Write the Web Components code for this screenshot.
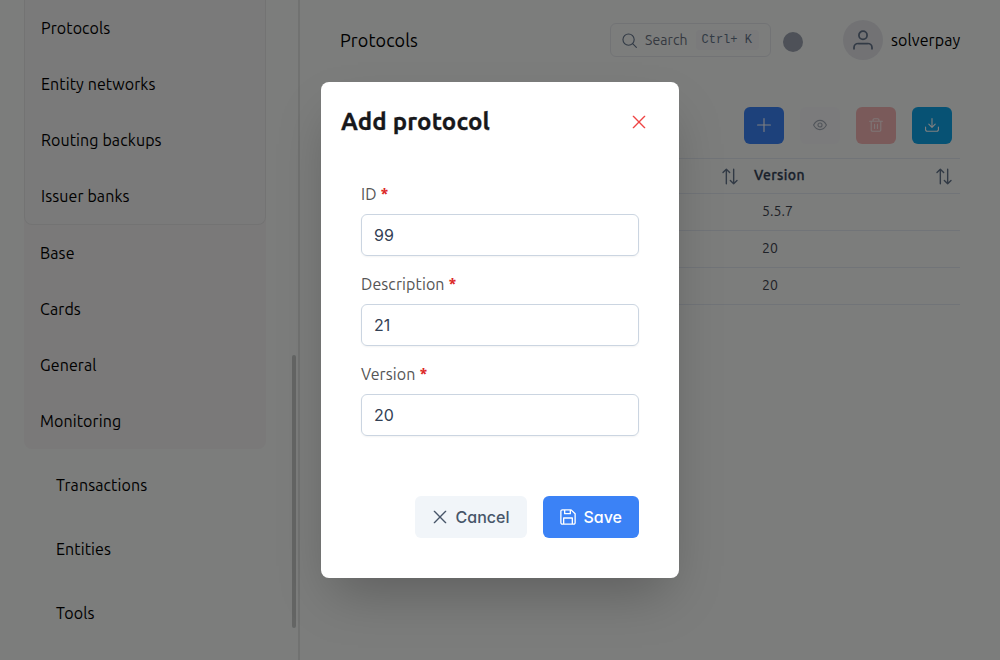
<!DOCTYPE html>
<html lang="en">
<head>
<meta charset="utf-8">
<title>Protocols</title>
<style>
html,body{margin:0;height:100%;overflow:hidden}
body{font-family:Ubuntu,"Noto Sans","Open Sans",sans-serif;font-size:16px;letter-spacing:.1px;color:#000;background:#f8fbf9}
</style>
</head>
<body>
<protocols-page></protocols-page>
<script>
const ICONS = {
  plus:'<path d="M12 1v22M1 12h22"/>',
  eye:'<path d="M1 12c5.500-10.500 16.500-10.500 22 0c-5.500 10.500-16.500 10.500-22 0z"/><circle cx="12" cy="12" r="3.500"/>',
  trash:'<path d="M1 5.500h22M3.800 5.500v15a2.300 2.300 0 0 0 2.300 2.300h11.800a2.300 2.300 0 0 0 2.300-2.300v-15M7 5.500V3a1.800 1.800 0 0 1 1.800-1.800h6.400a1.800 1.800 0 0 1 1.800 1.800v2.500M9.500 11v7M14.500 11v7"/>',
  download:'<path d="M12 1v14.500M6.500 10.500l5.500 5.500l5.500-5.500M1 15.500v4.500a2.600 2.600 0 0 0 2.600 2.600h16.800a2.600 2.600 0 0 0 2.600-2.600v-4.500"/>',
  times:'<path d="M3.500 3.500l17 17M20.500 3.500l-17 17"/>',
  save:'<path d="M3.500 1.300h13.200L22.700 7.200V20.500a2.200 2.200 0 0 1-2.200 2.200H3.500a2.200 2.200 0 0 1-2.200-2.200V3.500a2.200 2.200 0 0 1 2.200-2.200zM7 1.500v5.500h8.500V1.500M5.500 22.500v-9h13v9"/>',
  user:'<circle cx="12" cy="6.200" r="4.900"/><path d="M1.200 22.500v-1.500a5 5 0 0 1 5-4.800h11.600a5 5 0 0 1 5 4.800v1.500"/>',
  search:'<circle cx="10.500" cy="10.500" r="9"/><path d="M17 17l6 6"/>',
  sort:'<path d="M6.500 23V1M1.500 6l5-5l5 5M17.500 1v22M12.500 18l5 5l5-5"/>'
};

function define(name, html, setup) {
  const template = document.createElement('template');
  template.innerHTML = html;
  customElements.define(name, class extends HTMLElement {
    connectedCallback() {
      if (this.shadowRoot) return;
      this.attachShadow({ mode: 'open' }).append(template.content.cloneNode(true));
      if (setup) setup(this, this.shadowRoot);
    }
  });
}

define('ui-icon', `<style>
:host{display:inline-flex;flex:none;width:14px;height:14px}
svg{width:100%;height:100%;overflow:visible;fill:none;stroke:currentColor;stroke-width:var(--stroke,2);stroke-linecap:round;stroke-linejoin:round}
</style><svg viewBox="0 0 24 24" aria-hidden="true"></svg>`,
(host, root) => { root.querySelector('svg').innerHTML = ICONS[host.getAttribute('name')]; });

/* Single-line text in a box of fixed width. */
define('ui-text', `<style>:host{display:inline-block;white-space:nowrap;flex:none}</style><slot></slot>`,
(host) => { host.style.width = parseFloat(host.getAttribute('w')) + 'px'; });

define('nav-item', `<style>
:host{display:flex;align-items:center;box-sizing:border-box;height:56px;padding:0 16px}
:host([top]){height:64px;padding:0 32px}
</style><slot></slot>`);

define('side-bar', `<style>
:host{display:flex;box-sizing:border-box;width:300px;height:660px;border-right:2px solid #e2e5e3;flex:none}
nav{flex:1;padding:0 0 0 24px}
.group{width:242px;background:#f4f2f2;border-radius:0 0 8px 8px;margin-bottom:4px}
.card{box-sizing:border-box;height:225px;border:1px solid #e6e6e6;border-top:0;border-radius:0 0 8px 8px;background:#f5f5f5}
.bar{width:4px;height:273px;margin:355px 2px 0 0;border-radius:2px;background:#c8cac9}
</style>
<nav><div class="group"><div class="card">
<nav-item><ui-text w="70">Protocols</ui-text></nav-item>
<nav-item><ui-text w="115.500">Entity networks</ui-text></nav-item>
<nav-item><ui-text w="121">Routing backups</ui-text></nav-item>
<nav-item><ui-text w="89.500">Issuer banks</ui-text></nav-item></div>
<nav-item><ui-text w="35">Base</ui-text></nav-item>
<nav-item><ui-text w="41.500">Cards</ui-text></nav-item>
<nav-item><ui-text w="57.500">General</ui-text></nav-item>
<nav-item><ui-text w="81">Monitoring</ui-text></nav-item></div>
<nav-item top><ui-text w="91.500">Transactions</ui-text></nav-item>
<nav-item top><ui-text w="56">Entities</ui-text></nav-item>
<nav-item top><ui-text w="39">Tools</ui-text></nav-item>
</nav><div class="bar"></div>`);

define('search-box', `<style>
:host{display:flex;align-items:center;box-sizing:border-box;width:161px;height:34px;border:1px solid #e5e7eb;border-radius:6px;padding:0 11px;color:#6b7280;font-size:14px}
ui-icon{width:15px;height:15px;margin-right:8px;color:#64748b;--stroke:1.800}
kbd{display:flex;align-items:center;box-sizing:border-box;height:20px;width:63px;padding:0 6px;margin-left:8px;border-radius:4px;background:#f4f4f6;font:12px "Liberation Mono",monospace;letter-spacing:0;color:#64748b;white-space:pre}
</style><ui-icon name="search"></ui-icon><ui-text w="42.500">Search</ui-text><kbd><ui-text w="50.400">Ctrl+ K</ui-text></kbd>`);

define('top-bar', `<style>
:host{display:flex;align-items:center;height:80px}
.title{font-size:18px}
.dot{width:20px;height:20px;border-radius:50%;background:#9ca3b0;margin:3px 40px 0 12px}
.avatar{display:flex;align-items:center;justify-content:center;width:40px;height:40px;border-radius:50%;background:#e4e5e9;margin-right:8px;color:#64748b}
.avatar ui-icon{width:20px;height:20px;--stroke:2.100}
search-box{margin-left:auto}
</style><ui-text class="title" w="78">Protocols</ui-text><search-box></search-box><div class="dot"></div><div class="avatar"><ui-icon name="user"></ui-icon></div><ui-text w="69">solverpay</ui-text>`);

define('tool-button', `<style>
:host{display:flex;align-items:center;justify-content:center;box-sizing:border-box;width:40px;height:37px;padding-bottom:1px;border-radius:6px;background:var(--bg);color:var(--fg,#fff)}
ui-icon{--stroke:1.900}
</style>`, (host, root) => {
  const i = document.createElement('ui-icon');
  i.setAttribute('name', host.getAttribute('icon'));
  root.append(i);
});

define('data-table', `<style>
:host{display:block;border-top:1px solid #e2e8f0;font-size:14px;color:#334155}
.row{display:grid;grid-template-columns:406px 1fr;height:36px;border-bottom:1px solid #e2e8f0;align-items:center}
.head{height:34px}
.head div{display:flex;align-items:center;justify-content:flex-end;padding:0 8px}
.head ui-text{font-weight:500;letter-spacing:.350px;-webkit-text-stroke:.3px currentColor;margin-right:auto;margin-top:-2px}
ui-icon{width:16px;height:17px;color:#64748b;--stroke:2.100}
.row>ui-text{grid-column:2;padding-left:16px;margin-top:-2px;color:#3f4550}
</style>
<div class="row head"><div><ui-icon name="sort"></ui-icon></div><div><ui-text w="50.500">Version</ui-text><ui-icon name="sort"></ui-icon></div></div>
<div class="row"><ui-text w="31">5.5.7</ui-text></div>
<div class="row"><ui-text w="16">20</ui-text></div>
<div class="row"><ui-text w="16">20</ui-text></div>`);

define('form-field', `<style>
:host{display:block;height:90px}
.label{display:flex;align-items:center;height:40px;color:#555;gap:3.500px}
b{color:#dc2626}
.input{display:flex;align-items:center;box-sizing:border-box;height:42px;border:1px solid #cbd5e1;border-radius:6px;padding:0 12px;font:16px Inter,sans-serif;letter-spacing:0;color:#334155;box-shadow:0 1px 2px rgba(18,18,23,.05)}
</style><div class="label"><slot></slot><b>*</b></div><div class="input"></div>`,
(host, root) => { root.querySelector('.input').textContent = host.getAttribute('value'); });

define('action-button', `<style>
:host{display:flex;align-items:center;box-sizing:border-box;height:42px;padding:0 16.500px;gap:8px;border-radius:6px;background:var(--bg);color:var(--fg);font:500 16px Inter,sans-serif;letter-spacing:0;font-feature-settings:"cv11"}
ui-icon{width:16px;height:16px;--stroke:2}
</style>
<slot></slot>`, (host, root) => {
  const i = document.createElement('ui-icon');
  i.setAttribute('name', host.getAttribute('icon'));
  root.querySelector('slot').before(i);
});

define('protocol-dialog', `<style>
:host{display:flex;flex-direction:column;box-sizing:border-box;width:358px;height:496px;border-radius:8px;background:#fff;padding:20px;box-shadow:0 25px 50px -12px rgba(0,0,0,.25)}
header{display:flex;align-items:center;justify-content:space-between;height:40px;padding-right:12px}
header .title{font-size:24px;font-weight:700;color:#18181b;letter-spacing:.160px;-webkit-text-stroke:.3px currentColor;margin-top:-2px}
header ui-icon{width:16px;height:16px;color:#ef4444}
main{padding:32px 20px 0;flex:1}
footer{display:flex;justify-content:flex-end;gap:16px;padding:0 20px 20px}
action-button{width:112px}
action-button+action-button{width:96px}
</style>
<header><ui-text class="title" w="149.500">Add protocol</ui-text><ui-icon name="times"></ui-icon></header>
<main><form-field value="99"><ui-text w="16">ID</ui-text></form-field>
<form-field value="21"><ui-text w="84">Description</ui-text></form-field>
<form-field value="20"><ui-text w="55">Version</ui-text></form-field></main>
<footer><action-button icon="times" style="--bg:#f1f5f9;--fg:#475569"><ui-text w="53.500">Cancel</ui-text></action-button><action-button icon="save" style="--bg:#3b82f6;--fg:#fff"><ui-text w="38">Save</ui-text></action-button></footer>`);

define('protocols-page', `<style>
:host{display:flex;position:relative;width:1000px;height:660px;overflow:hidden}
.content{flex:1;padding:0 40px}
.tools{display:flex;justify-content:flex-end;gap:16px;padding:27px 8px 14px}
.mask{position:absolute;inset:0;display:flex;align-items:center;justify-content:center;background:rgba(0,0,0,.5)}
</style>
<side-bar></side-bar>
<div class="content"><top-bar></top-bar>
<div class="tools"><tool-button icon="plus" style="--bg:#3b82f6"></tool-button><tool-button icon="eye" style="--bg:#f6f7f9;--fg:#a3aab5"></tool-button><tool-button icon="trash" style="--bg:#f5b5b5;--fg:#fbeaea"></tool-button><tool-button icon="download" style="--bg:#0ea5e9"></tool-button></div>
<data-table></data-table></div>
<div class="mask"><protocol-dialog></protocol-dialog></div>`);
</script>
</body>
</html>
